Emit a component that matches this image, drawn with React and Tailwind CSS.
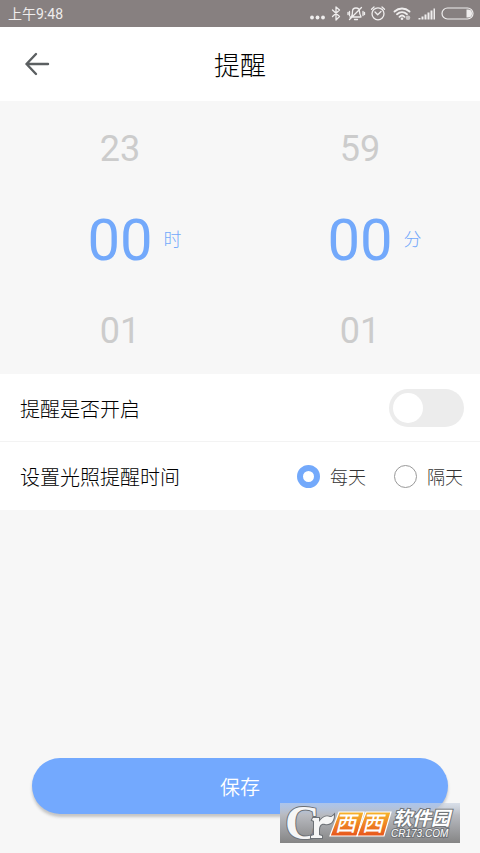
import { useState } from "react";

function StatusIcons() {
  return (
    <svg width="166" height="20" viewBox="0 0 166 20" fill="none" stroke="#efeded" strokeWidth="1.3" strokeLinecap="round" strokeLinejoin="round" aria-hidden="true">
      <g fill="#efeded" stroke="none">
        <circle cx="4" cy="13.5" r="1.9" />
        <circle cx="9.5" cy="13.5" r="1.9" />
        <circle cx="15" cy="13.5" r="1.9" />
      </g>
      <path d="M24.500 6l7 6.500-3.500 3.500v-13l3.500 3-7 6.500" />
      <path d="M42 13h11M43.500 12.500c1-1.500 1-3 1-5 0-2 1.500-3.500 3.500-3.500s3.500 1.500 3.500 3.500c0 2 .5 3.500 1.500 5M46.500 15.500h3M41.500 15.500L53.500 3.500" />
      <path d="M41.500 7.500v4M40 8.500v2M55 7.500v4M56.500 8.500v2" />
      <circle cx="70" cy="9.800" r="6" />
      <path d="M67 8l2.700 2.800L73 7.500M63.500 5.300l2.500-2.300M76.500 5.300L74 3" />
      <path d="M86.500 7.500c4.500-4 10.500-4 15 0M89 10.200c3-2.700 7-2.700 10 0" strokeWidth="1.900" />
      <path d="M91.500 12.800c1.500-1.500 3.500-1.500 5 0" strokeWidth="1.900" />
      <circle cx="94" cy="14.700" r="1.300" fill="#efeded" stroke="none" />
      <circle cx="100" cy="13.700" r="2.300" fill="#cbc7c7" stroke="none" />
      <g fill="#efeded" stroke="none">
        <path d="M110.500 14h2v1.500h-2zM113.500 12.500h2v3h-2zM116.500 10.500h2v5h-2zM119.500 8.500h2v7h-2zM122.500 6.500h2v9h-2zM125.500 4.500h1.500v11h-1.500z" />
      </g>
      <rect x="134" y="4" width="31" height="11" rx="5.500" strokeWidth="1.200" />
      <path d="M158.500 5.500h1.500a4 4 0 010 8h-1.500z" fill="#efeded" stroke="none" />
    </svg>
  );
}

function Wheel({ label, unit, max, value, onChange }) {
  const count = max + 1;
  const show = (n) => String((n + count) % count).padStart(2, "0");
  return (
    <div role="group" aria-label={label} className="grid flex-1 grid-rows-[91px_91px_91px] items-center justify-items-center">
      <button type="button" onClick={() => onChange((value + max) % count)} className="pt-1 text-4xl text-[#cccccc]">
        {show(value - 1)}
      </button>
      <div className="grid w-full grid-cols-[1fr_auto_1fr] items-center gap-[11px] pt-1 text-[#73a9fb]">
        <span className="col-start-2 text-[58px] leading-none">{show(value)}</span>
        <span className="text-lg font-light">{unit}</span>
      </div>
      <button type="button" onClick={() => onChange((value + 1) % count)} className="pt-1 text-4xl text-[#cccccc]">
        {show(value + 1)}
      </button>
    </div>
  );
}

function RadioOption({ label, checked, onChange }) {
  return (
    <label className="flex items-center gap-2.5 text-lg font-light text-[#333333]">
      <input
        type="radio"
        name="frequency"
        checked={checked}
        onChange={onChange}
        className="size-[23px] appearance-none rounded-full border border-[#999999] bg-white checked:border-[6px] checked:border-[#73a9fb]"
      />
      <span className="pt-1">{label}</span>
    </label>
  );
}

function Watermark() {
  return (
    <svg className="absolute right-5 bottom-2.5 overflow-visible" width="180" height="40" viewBox="0 0 180 40" role="img" aria-label="西西软件园 CR173.COM">
      <defs>
        <linearGradient id="plate" x1="0" y1="0" x2="0" y2="1">
          <stop offset="0" stopColor="#c9d3e2" stopOpacity=".65" />
          <stop offset=".3" stopColor="#b8bac0" />
          <stop offset="1" stopColor="#858585" />
        </linearGradient>
        <linearGradient id="flame" x1="0" y1="0" x2="0" y2="1">
          <stop offset="0" stopColor="#f6b52c" />
          <stop offset="1" stopColor="#e7541d" />
        </linearGradient>
      </defs>
      <rect width="180" height="40" fill="url(#plate)" />
      <g fill="#f6f6f6" stroke="#6d7176" strokeWidth="2" paintOrder="stroke" fontFamily="Liberation Serif, serif">
        <text x="5" y="36" fontSize="48" fontWeight="700">C</text>
        <path d="M33 15h6v4c3-4 6-7 11-5 1 .5 3-1 4-2 0 7-4 10-9 9-4-1-6 2-6 6v5l3 1v2H31v-2l3-1V18l-2-1z" />
      </g>
      <g fill="url(#flame)" stroke="#ffffff" strokeWidth="1.200">
        <path d="M59 9h25l-7 24H50z" />
        <path d="M86 9h25l-7 24H77z" />
      </g>
      <g fill="#ffffff" fontFamily="Noto Sans CJK SC, sans-serif" fontStyle="italic">
        <text x="55" y="28" fontSize="21" fontWeight="500">西</text>
        <text x="82" y="28" fontSize="21" fontWeight="500">西</text>
        <g stroke="#707478" strokeWidth="2" paintOrder="stroke" fontWeight="700">
          <text x="113" y="22" fontSize="19">软件园</text>
          <text x="111" y="34" fontSize="10" fontWeight="400" fontFamily="Liberation Sans, sans-serif">CR173.COM</text>
        </g>
      </g>
    </svg>
  );
}

export default function App() {
  const [hour, setHour] = useState(0);
  const [minute, setMinute] = useState(0);
  const [enabled, setEnabled] = useState(false);
  const [frequency, setFrequency] = useState("daily");

  return (
    <main className="relative flex min-h-screen flex-col bg-[#f7f7f7] font-[Roboto,'Noto_Sans_CJK_SC',sans-serif] text-[#222222]">
      <div className="flex h-[27px] items-center justify-between bg-[#878080] pr-1.5 pl-2 text-sm text-[#efeded]">
        <span>上午9:48</span>
        <StatusIcons />
      </div>

      <header className="grid h-[74px] grid-cols-[1fr_auto_1fr] items-center bg-white px-6">
        <button type="button" aria-label="返回" className="justify-self-start">
          <svg width="26" height="24" viewBox="0 0 26 24" fill="none" stroke="#5b5f61" strokeWidth="2.400" strokeLinecap="round" strokeLinejoin="round">
            <path d="M24 12H2.500M12 2L2.500 12 12 22" />
          </svg>
        </button>
        <h1 className="pt-1 text-[26px] font-light text-black">提醒</h1>
      </header>

      <section className="flex" aria-label="提醒时间">
        <Wheel label="时" unit="时" max={23} value={hour} onChange={setHour} />
        <Wheel label="分" unit="分" max={59} value={minute} onChange={setMinute} />
      </section>

      <label className="flex h-[68px] items-center justify-between border-b border-[#f3f3f3] bg-white pr-4 pl-5 text-xl font-light text-black">
        <span className="pt-1">提醒是否开启</span>
        <input
          type="checkbox"
          role="switch"
          checked={enabled}
          onChange={(e) => setEnabled(e.target.checked)}
          className="flex h-[38px] w-[75px] appearance-none items-center rounded-full bg-[#ececec] px-1 before:size-[30px] before:rounded-full before:bg-white checked:justify-end checked:bg-[#73a9fb]"
        />
      </label>

      <div role="radiogroup" aria-labelledby="frequency-label" className="flex h-[68px] items-center justify-between bg-white pr-[17px] pl-5">
        <span id="frequency-label" className="pt-1 text-xl font-light text-black">设置光照提醒时间</span>
        <div className="flex gap-7">
          <RadioOption label="每天" checked={frequency === "daily"} onChange={() => setFrequency("daily")} />
          <RadioOption label="隔天" checked={frequency === "alternate"} onChange={() => setFrequency("alternate")} />
        </div>
      </div>

      <button type="button" className="mx-8 mt-auto mb-[39px] h-14 rounded-full bg-[#73a9fe] pt-1 text-xl font-[350] text-white shadow-[0_3px_3px_#c4c4c4]">
        保存
      </button>
      <Watermark />
    </main>
  );
}
